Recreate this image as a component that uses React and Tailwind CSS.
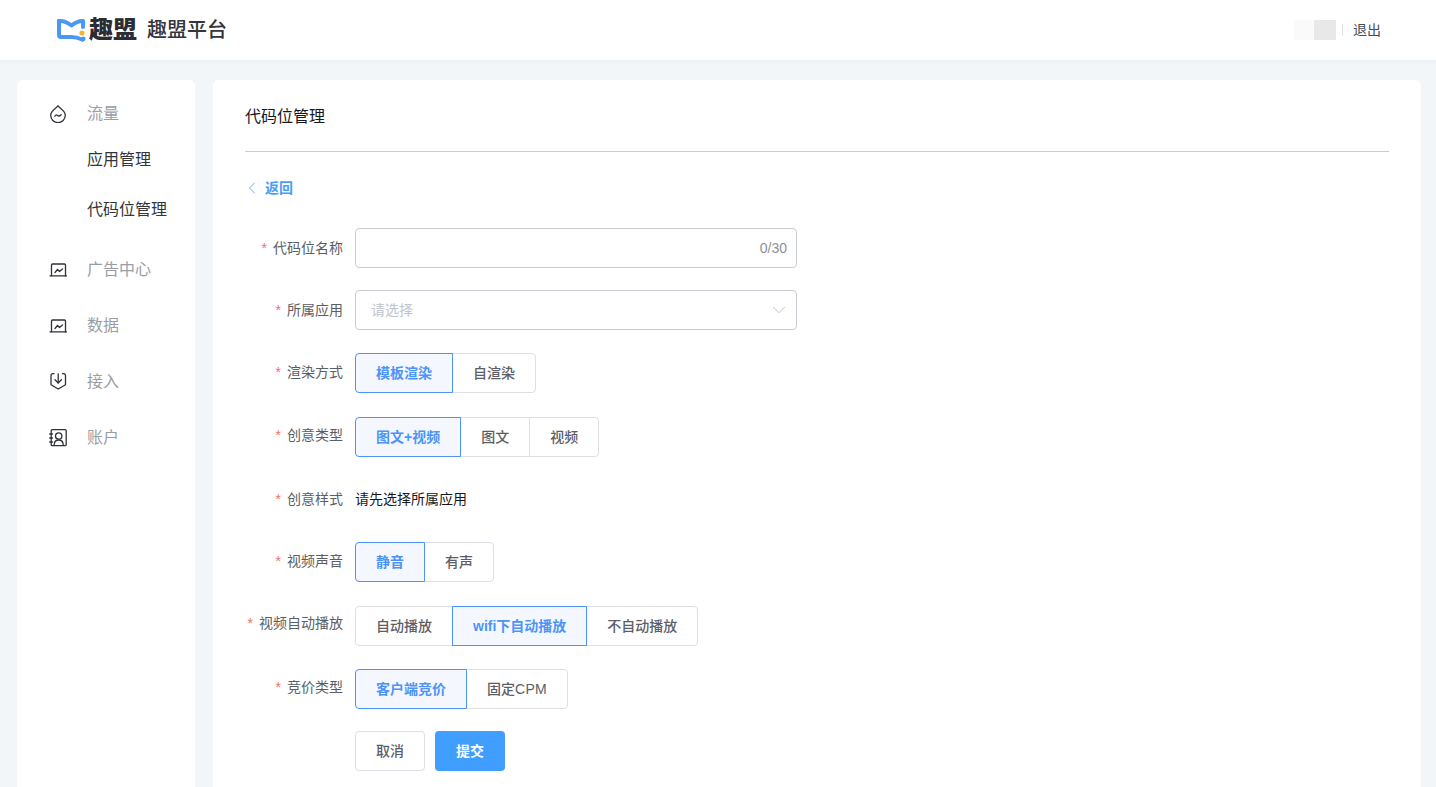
import React from 'react';
import { ChevronLeft, ChevronDown } from 'lucide-react';

const font = { fontFamily: '"Liberation Sans", "Noto Sans CJK SC", sans-serif' };

function Logo() {
  return (
    <svg width="30" height="26" viewBox="0 0 30 26" fill="none">
      <path d="M3 4 Q9 3.500 15.500 8.500 Q22 3.500 27 4 V10" stroke="#4a97f5" strokeWidth="4" strokeLinecap="round" strokeLinejoin="round" />
      <path d="M3 4 V18 Q3 20 5 20 H15 Q21 20 26 22.500 Q27.500 23 27.500 21.500" stroke="#4a97f5" strokeWidth="4" strokeLinecap="round" strokeLinejoin="round" />
      <circle cx="26" cy="16" r="2.600" fill="#f7b52c" />
    </svg>
  );
}

function DropIcon() {
  return (
    <svg width="18" height="18" viewBox="0 0 18 18" fill="none" stroke="#2f3238" strokeWidth="1.300" strokeLinecap="round" strokeLinejoin="round">
      <path d="M9 0.800 C10.500 3.500 16.300 5.500 16.300 10.300 A7.300 7.300 0 0 1 1.700 10.300 C1.700 5.500 7.500 3.500 9 0.800 Z" />
      <path d="M5.800 11.300 Q7 9.100 8.500 10.500 Q10 11.900 12.200 9.700" />
    </svg>
  );
}

function ChartIcon() {
  return (
    <svg width="18" height="18" viewBox="0 0 18 18" fill="none" stroke="#2f3238" strokeWidth="1.300" strokeLinecap="round" strokeLinejoin="round">
      <path d="M2.500 14.800 V4 Q2.500 3 3.500 3 H15.500 Q16.500 3 16.500 4 V14.800" />
      <path d="M1 14.800 H18" />
      <path d="M6 11.500 L8.500 8.500 L10.500 10.500 L13.500 8" />
    </svg>
  );
}

function AccessIcon() {
  return (
    <svg width="18" height="18" viewBox="0 0 18 18" fill="none" stroke="#2f3238" strokeWidth="1.300" strokeLinecap="round" strokeLinejoin="round">
      <path d="M5 0.700 H4 Q2 0.700 2 2.700 V11.700 L9.200 16 L16.500 11.700 V2.700 Q16.500 0.700 14.500 0.700 H13.500" />
      <path d="M9.200 1 V9.800" />
      <path d="M6 6.800 L9.200 10 L12.400 6.800" />
    </svg>
  );
}

function AccountIcon() {
  return (
    <svg width="18" height="18" viewBox="0 0 18 18" fill="none" stroke="#2f3238" strokeWidth="1.300" strokeLinecap="round" strokeLinejoin="round">
      <rect x="2.200" y="0.700" width="15" height="16" rx="1" />
      <path d="M0.700 5 H3.500 M0.700 9 H3.500 M0.700 13 H3.500" />
      <circle cx="9.700" cy="7" r="3.200" />
      <path d="M5.200 15.500 Q5.500 11 9.700 11 Q13.900 11 14.200 15.500" />
    </svg>
  );
}

function NavGroup({ icon, label, className }) {
  return (
    <div className={`flex h-7 items-center ${className}`}>
      <div className="flex w-[18px] justify-center">{icon}</div>
      <span className="ml-5 text-base text-[#9a9da6]">{label}</span>
    </div>
  );
}

function Sidebar() {
  return (
    <aside className="w-[178px] shrink-0 rounded-t-md bg-white pl-8 pt-5">
      <NavGroup icon={<DropIcon />} label="流量" />
      <div className="mt-[18px] h-[28px] pl-[38px] text-base leading-[28px] text-[#33353a]">应用管理</div>
      <div className="mt-[22px] h-[28px] pl-[38px] text-base leading-[28px] text-[#33353a]">代码位管理</div>
      <NavGroup icon={<ChartIcon />} label="广告中心" className="mt-[32px]" />
      <NavGroup icon={<ChartIcon />} label="数据" className="mt-7" />
      <NavGroup icon={<AccessIcon />} label="接入" className="mt-7" />
      <NavGroup icon={<AccountIcon />} label="账户" className="mt-7" />
    </aside>
  );
}

function Row({ label, className, labelClass = '', children }) {
  return (
    <div className={`flex items-center ${className}`}>
      <label className={`w-[98px] text-right text-sm text-[#5c5e66] ${labelClass}`}>
        <span className="mr-1.5 text-[#f56c6c]">*</span>
        {label}
      </label>
      <div className="ml-3">{children}</div>
    </div>
  );
}

function Segments({ items, active }) {
  return (
    <div className="flex h-10">
      {items.map((item, i) => {
        const on = i === active;
        return (
          <div
            key={i}
            className={`flex items-center border px-5 text-sm ${i > 0 ? '-ml-px' : 'rounded-l'} ${i === items.length - 1 ? 'rounded-r' : ''} ${on ? 'relative z-10 border-[#4d94f8] bg-[#f4f8fe] font-semibold text-[#4d94f8]' : 'border-[#dcdfe6] bg-white font-medium text-[#5c5e66]'}`}
          >
            {item}
          </div>
        );
      })}
    </div>
  );
}

export default function App() {
  return (
    <div style={font} className="flex h-screen flex-col overflow-hidden bg-[#f3f6f9]">
      <header className="flex h-[60px] shrink-0 items-center bg-white pl-[56px] pr-[55px] shadow-[0_1px_4px_rgba(0,0,0,0.05)]">
        <Logo />
        <span className="ml-[3px] text-2xl font-black leading-none text-[#2b2d33]">趣盟</span>
        <span className="ml-[10px] text-[20px] font-medium text-[#33353a]">趣盟平台</span>
        <div className="ml-auto flex items-center">
          <div className="h-5 w-[20px] bg-[#fafafa]" />
          <div className="h-5 w-[22px] bg-[#e8e8e8]" />
          <div className="ml-1.5 h-3 w-px bg-[#dcdfe6]" />
          <span className="ml-2.5 text-sm text-[#4a4c52]">退出</span>
        </div>
      </header>

      <div className="flex min-h-0 flex-1 gap-[18px] pl-[17px] pr-[15px] pt-5">
        <Sidebar />
        <main className="min-w-0 flex-1 rounded-t-md bg-white px-8">
          <h1 className="flex h-[72px] items-center border-b border-[#c9cbd0] pt-[2px] text-base font-normal text-[#17181c]">代码位管理</h1>

          <div className="mt-[26px] flex h-5 items-center text-[#4a9dfb]">
            <ChevronLeft size={20} strokeWidth={1} className="-ml-[3px]" />
            <span className="ml-[3px] text-sm font-semibold">返回</span>
          </div>

          <Row label="代码位名称" className="mt-[30px]">
            <div className="flex h-10 w-[442px] items-center justify-end rounded border border-[#c9cbd3] pr-[9px] text-sm text-[#8c8f96]">0/30</div>
          </Row>
          <Row label="所属应用" className="mt-[22px]">
            <div className="flex h-10 w-[442px] items-center justify-between rounded border border-[#c9cbd3] pl-[15px] pr-[6px] text-sm text-[#c0c4cc]">
              请选择
              <ChevronDown size={22} strokeWidth={1} className="text-[#b8bbc2]" />
            </div>
          </Row>
          <Row label="渲染方式" className="mt-[23px]" labelClass="-translate-y-px">
            <Segments items={['模板渲染', '自渲染']} active={0} />
          </Row>
          <Row label="创意类型" className="mt-6" labelClass="-translate-y-0.5">
            <Segments items={['图文+视频', '图文', '视频']} active={0} />
          </Row>
          <Row label="创意样式" className="mt-[32px] h-[20px]">
            <span className="text-sm text-[#17181c]">请先选择所属应用</span>
          </Row>
          <Row label="视频声音" className="mt-[33px]" labelClass="-translate-y-px">
            <Segments items={['静音', '有声']} active={0} />
          </Row>
          <Row label="视频自动播放" className="mt-6" labelClass="-translate-y-[3px]">
            <Segments items={['自动播放', 'wifi下自动播放', '不自动播放']} active={1} />
          </Row>
          <Row label="竞价类型" className="mt-[23px]" labelClass="-translate-y-0.5">
            <Segments items={['客户端竞价', <>固定<span className="tracking-[0.300px]">CPM</span></>]} active={0} />
          </Row>

          <div className="ml-[110px] mt-[22px] flex gap-2.5">
            <button className="h-10 w-[70px] rounded border border-[#dcdfe6] bg-white text-sm font-medium text-[#5c5e66]">取消</button>
            <button className="h-10 w-[70px] rounded bg-[#409eff] text-sm font-semibold text-white">提交</button>
          </div>
        </main>
      </div>
    </div>
  );
}
